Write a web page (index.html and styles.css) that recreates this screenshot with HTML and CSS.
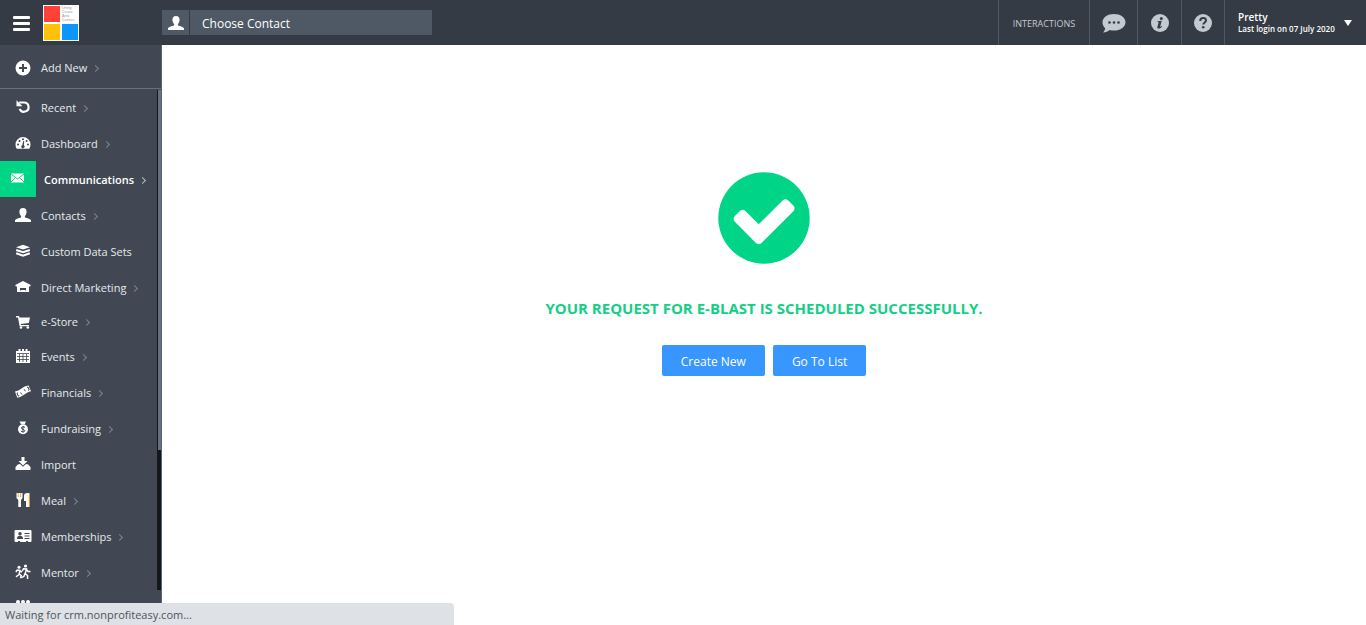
FILE: index.html
```
<!doctype html>
<html lang="en">
<head>
    <meta charset="utf-8">
    <title>E-Blast</title>
    <link rel="stylesheet" href="styles.css">
</head>
<body>
    <header class="topbar">
        <button class="menu-btn" type="button" aria-label="Menu"><i></i><i></i><i></i></button>
        <a class="logo" href="#">
            <span class="red"></span>
            <span class="logo-text">Unity Cross Arts Center</span>
            <span class="yellow"></span>
            <span class="blue"></span>
        </a>
        <div class="search">
            <label for="contact" aria-label="Contact">
                <svg width="16" height="14" viewBox="0 0 16 14"><path d="M8 0c2.500 0 3.600 1.500 3.600 3.800 0 2-.8 3.300-1.700 4.200v1.200c0 .6 5.600 1.200 6.100 3.200V14H0v-1.600c.5-2 6.100-2.600 6.100-3.200V8c-.9-.9-1.700-2.200-1.700-4.200C4.400 1.500 5.500 0 8 0z"/></svg>
            </label>
            <input type="text" id="contact" placeholder="Choose Contact">
        </div>
        <nav class="tools">
            <a class="interactions" href="#">INTERACTIONS</a>
            <a class="chat" href="#" aria-label="Messages">
                <svg width="24" height="20" viewBox="0 0 24 20"><path d="M12 1c6.300 0 11.500 3.500 11.500 8.300S18.300 17.600 12 17.600c-1.500 0-3-.2-4.300-.6C5.900 18.400 3.800 19.200 1 19.400c1.200-1.200 2-2.500 2.200-4.200C1.500 13.700.5 11.600.5 9.300.5 4.500 5.700 1 12 1z"/><g fill="#353b45"><circle cx="7.500" cy="9.500" r="1.300"/><circle cx="12" cy="9.500" r="1.300"/><circle cx="16.500" cy="9.500" r="1.300"/></g></svg>
            </a>
            <a class="info" href="#" aria-label="Information">
                <svg width="18" height="18" viewBox="0 0 18 18"><circle cx="9" cy="9" r="9"/><g fill="#353b45"><circle cx="10.300" cy="4.400" r="1.500"/><path d="M6.500 7.200l4.200-.5-1.500 5.700c-.2.800.6.500 1.600-.4l.4.500c-1.200 1.500-2.300 2.100-3.400 2.100-1.300 0-1.700-.8-1.300-2.200l1-3.500c.2-.8-.1-.9-1.100-1z"/></g></svg>
            </a>
            <a class="help" href="#" aria-label="Help">
                <svg width="18" height="18" viewBox="0 0 18 18"><circle cx="9" cy="9" r="9"/><path d="M6.200 7c0-1.900 1.100-2.900 2.900-2.900s2.900 1 2.900 2.400c0 2-2.700 1.900-2.700 4.100" fill="none" stroke="#353b45" stroke-width="2"/><circle cx="9.200" cy="13.200" r="1.300" fill="#353b45"/></svg>
            </a>
            <a class="user" href="#">
                <span><b>Pretty</b><small>Last login on 07 July 2020</small></span>
                <svg width="8" height="6" viewBox="0 0 8 6"><path d="M0 0h8L4 6z"/></svg>
            </a>
        </nav>
    </header>

    <div class="container">
        <aside class="sidebar">
            <a class="item add-new" href="#">
                <svg viewBox="0 0 16 16"><circle cx="8" cy="8" r="7.500"/><path d="M8 4v8M4 8h8" stroke="#414853" stroke-width="2"/></svg>
                <span>Add New</span><em></em>
            </a>
            <nav class="side-nav">
                <a class="item" href="#">
                    <svg viewBox="0 0 16 16"><path d="M4.200 3.500H9a4.600 4.600 0 1 1-4.300 6.300" fill="none" stroke="#fff" stroke-width="2.200"/><path d="M1.500 1.200v6h6z"/></svg>
                    <span>Recent</span><em></em>
                </a>
                <a class="item" href="#">
                    <svg viewBox="0 0 16 16"><path d="M8 2a7.500 7.500 0 0 1 7.500 7.500c0 1.600-.4 3-1.200 4.200H1.700A7.600 7.600 0 0 1 .5 9.500 7.500 7.500 0 0 1 8 2z"/><g fill="#414853"><circle cx="3" cy="9.500" r="1"/><circle cx="4.500" cy="6" r="1"/><circle cx="8" cy="4.300" r="1"/><circle cx="11.600" cy="6" r="1"/><circle cx="13" cy="9.500" r="1"/><path d="M8.200 6l1 .2-.3 4a1.700 1.700 0 1 1-1.500-.2z"/></g></svg>
                    <span>Dashboard</span><em></em>
                </a>
                <a class="item active" href="#">
                    <i class="tile"><svg viewBox="0 0 16 12"><path d="M1 .5h13v9H1z"/><path d="M1 1l6.500 5L14 1M1 9l4.200-4M14 9L9.800 5" fill="none" stroke="#00d487"/></svg></i>
                    <span>Communications</span><em></em>
                </a>
                <a class="item" href="#">
                    <svg viewBox="0 0 16 16"><path d="M8 1c2.500 0 3.600 1.500 3.600 3.800 0 2-.8 3.300-1.700 4.200v1.200c0 .6 5.600 1.200 6.100 3.200V15H0v-1.600c.5-2 6.100-2.600 6.100-3.200V9c-.9-.9-1.700-2.200-1.700-4.200C4.400 2.500 5.500 1 8 1z"/></svg>
                    <span>Contacts</span><em></em>
                </a>
                <a class="item" href="#">
                    <svg viewBox="0 0 16 16"><path d="M8 1.800l7 2.400L8 6.600 1 4.200z"/><path d="M1.200 7L8 9.200 14.800 7M1.200 10.300L8 12.600l6.800-2.300" fill="none" stroke="#fff" stroke-width="2"/></svg>
                    <span>Custom Data Sets</span>
                </a>
                <a class="item" href="#">
                    <svg viewBox="0 0 16 16"><path d="M8 2l7.800 4-.8 1.700-1-.4V13H2V7.300l-1 .4L.2 6z"/><path d="M5 9h6v3H5z" fill="#414853"/><path d="M5.500 11h5v1h-5z"/></svg>
                    <span>Direct Marketing</span><em></em>
                </a>
                <a class="item short" href="#">
                    <svg viewBox="0 0 16 16"><path d="M1 2h3l.5 1.500H15L13.800 9 5.700 10l.3 1h8v1.300H4.600L3 3.400H1z"/><circle cx="6" cy="13.500" r="1.300"/><circle cx="12.800" cy="13.500" r="1.300"/></svg>
                    <span>e-Store</span><em></em>
                </a>
                <a class="item" href="#">
                    <svg viewBox="0 0 16 16"><path d="M1 3h14v12H1z"/><path d="M3.500 1h2v3h-2zM10.500 1h2v3h-2zM7 1h2v3H7z"/><path d="M2 5.500h12M2 8.500h12M2 11.500h12M4.500 6v8M8 6v8M11.500 6v8" stroke="#414853" stroke-width=".8"/></svg>
                    <span>Events</span><em></em>
                </a>
                <a class="item" href="#">
                    <svg viewBox="0 0 16 16"><path d="M0 7.500C5 7 8 2 13.500 1.500L16 7.300C11 8 8 13 2.300 13.800z"/><g fill="none" stroke="#414853"><path d="M3 8.800l-1 .4 1.200 2.900 1-.4M12 3.500l1-.4L14.200 6l-1 .4M5.500 8.500l1.500 2M9 5.200l1.500 2" stroke-width="1"/></g></svg>
                    <span>Financials</span><em></em>
                </a>
                <a class="item" href="#">
                    <svg viewBox="0 0 16 16"><path d="M4.500 1.500h6.500L9.700 4.300H6z"/><circle cx="8" cy="9.300" r="5"/><path d="M10 7.500C9 6.500 6.300 6.500 6.300 8s3.500 1.200 3.500 2.700-2.800 1.500-3.800.4M8 6v6.600" fill="none" stroke="#414853" stroke-width="1"/></svg>
                    <span>Fundraising</span><em></em>
                </a>
                <a class="item" href="#">
                    <svg viewBox="0 0 16 16"><path d="M6.500 1h3v4h3L8 9.500 3.500 5h3z"/><path d="M2.800 8.500L5 8l3 2.700L11 8l2.200.5 2.300 2.500v3H.5v-3z"/></svg>
                    <span>Import</span>
                </a>
                <a class="item" href="#">
                    <svg viewBox="0 0 16 16"><path d="M1.500 1h6v5L6 8v7H3.300V8L1.500 6zM9 3.500C9 2 10.500 1 12 1h2v14h-3V9H9z"/><path d="M3.200 1v4M5.600 1v4M14.300 1v14" stroke="#f2b13c" stroke-width="1"/></svg>
                    <span>Meal</span><em></em>
                </a>
                <a class="item" href="#">
                    <svg class="wide" viewBox="0 0 18 14"><rect x=".5" y="1" width="17" height="12" rx="1"/><g fill="#414853"><circle cx="6" cy="4.800" r="1.700"/><path d="M3 10c0-2 1-3.200 3-3.200S9 8 9 10zM10.500 4h5v1h-5zM10.500 6.500h5v1h-5zM10.500 9h5v1h-5zM4 12h2v1H4zM12 12h2v1h-2z"/></g></svg>
                    <span>Memberships</span><em></em>
                </a>
                <a class="item" href="#">
                    <svg viewBox="0 0 16 16"><circle cx="4" cy="3.300" r="1.500"/><circle cx="10.500" cy="2" r="1.600"/><path d="M.8 8l1.500-2 2.500.3L4.200 10l2 1.500-.7 2.800M4 10.500L1 12.800M5 7l2 1M7.300 7L8.500 4.700l3 .3-1.300 4.500 2.300 2 .1 3.500M10 9.500L9 12.300l-2.500 1.400M11.500 5.500L13 7.500h2.500" fill="none" stroke="#fff" stroke-width="1.500"/></svg>
                    <span>Mentor</span><em></em>
                </a>
                <a class="item" href="#" aria-label="More">
                    <svg viewBox="0 0 16 16"><circle cx="3" cy="2" r="2"/><circle cx="8" cy="2" r="2"/><circle cx="13" cy="2" r="2"/><circle cx="3" cy="7" r="2"/><circle cx="8" cy="7" r="2"/><circle cx="13" cy="7" r="2"/></svg>
                </a>
            </nav>
            <div class="scroll"><div class="thumb"></div></div>
        </aside>

        <main class="content">
            <svg class="done" width="92" height="92" viewBox="0 0 92 92"><circle cx="46" cy="46" r="45.700"/><path class="tick" d="M16.600 44.300l5.600-5.600q2.600-2 5 0L40.700 52.200 64.800 28.200q2.700-2 5.200 0l5.600 5.600q2 2.500 0 5.200L43.300 71.200q-2.600 2-5.100 0L16.600 49.500q-2-2.600 0-5.200z"/></svg>
            <h1>YOUR REQUEST FOR E-BLAST IS SCHEDULED SUCCESSFULLY.</h1>
            <div class="btns">
                <button type="button">Create New</button>
                <button type="button">Go To List</button>
            </div>
        </main>
    </div>

    <div class="status">Waiting for crm.nonprofiteasy.com...</div>
</body>
</html>
```
FILE: styles.css
```
* { box-sizing:border-box; }
body { margin:0; height:100vh; display:flex; flex-direction:column; overflow:hidden; background:#fff; font-family:"Open Sans","Liberation Sans",sans-serif; font-size:11px; }
a { color:inherit; text-decoration:none; }
button, input { font-family:inherit; border:0; }
svg { display:block; flex:none; }

/* top bar */
.topbar { height:45px; flex:none; display:flex; align-items:center; background:#353b45; color:#fff; }
.menu-btn { width:18px; margin:1px 12px 0 13px; padding:0; background:none; display:flex; flex-direction:column; gap:3px; }
.menu-btn i { height:3px; width:17px; background:#fff; border-radius:1px; }
.logo { width:36px; height:36px; padding:1px; display:grid; grid-template-columns:16px 16px; grid-template-rows:16px 16px; gap:2px; background:#fff; overflow:hidden; }
.logo-text { color:#888; font-size:4px; line-height:4px; width:12px; }
.red { background:#ff4136; }
.yellow { background:#ffc20a; }
.blue { background:#0c96ff; }
.search { margin-left:83px; display:flex; gap:1px; height:25px; flex:0 1 270px; }
.search label { width:27px; background:#4e5965; display:flex; align-items:center; justify-content:center; }
.search svg { fill:#fff; }
.search input { flex:1; min-width:0; padding:2px 12px 0; background:#4e5965; color:#fff; font-size:12px; }
.search input::placeholder { color:#fff; opacity:1; }
.tools { margin-left:auto; height:100%; display:flex; color:#c3c9d1; }
.tools a { display:flex; align-items:center; justify-content:center; border-left:1px solid #4e5763; }
.tools svg { fill:#c3c9d1; }
.tools .interactions { width:91px; font-size:9px; padding-top:2px; }
.tools .chat { width:48px; }
.tools .info { width:44px; }
.tools .help { width:43px; }
.tools .user { width:142px; padding:0 14px 0 13px; justify-content:space-between; color:#fff; }
.user b, .user small { display:block; font-weight:600; line-height:12px; white-space:nowrap; }
.user b { font-size:10px; }
.user small { font-size:8px; }
.tools .user svg { fill:#fff; }

/* sidebar */
.container { flex:1; min-height:0; display:flex; }
.sidebar { position:relative; width:162px; flex:none; display:flex; flex-direction:column; background:#414853; border-right:1px solid #596475; }
.side-nav { flex:1; min-height:0; overflow:hidden; }
.item { height:36px; padding-left:15px; display:flex; align-items:center; color:#e6eaee; white-space:nowrap; }
.item svg { width:16px; height:16px; fill:#fff; margin-right:10px; }
.item svg.wide { width:18px; height:14px; margin:0 9px 0 -1px; }
.item em { width:5px; height:5px; margin:2px 0 0 6px; border:solid #7b858f; border-width:1px 1px 0 0; transform:rotate(45deg); }
.add-new { height:44px; padding-top:2px; border-bottom:1px solid #66717f; }
.short { height:33px; }
.active { padding-left:0; color:#fff; font-weight:600; }
.tile { width:36px; height:36px; margin-right:8px; display:flex; align-items:center; justify-content:center; background:#00d487; }
.item .tile svg { width:16px; height:12px; margin:0; }
.active em { border-color:#b3bac2; }
.scroll { position:absolute; top:45px; right:0; width:4px; height:500px; background:#14171b; padding-left:1px; }
.thumb { height:72%; background:#66717f; }

/* content */
.content { flex:1; padding-top:127px; display:flex; flex-direction:column; align-items:center; }
.done { fill:#00d487; }
.done .tick { fill:#fff; }
.content h1 { margin:34px 0 0; font-size:15px; line-height:20px; color:#14cf86; }
.btns { margin-top:27px; display:flex; gap:8px; }
.btns button { height:31px; padding:2px 19px 0; border-radius:2px; background:#3896ff; color:#fff; font-size:12px; }

/* browser status */
.status { position:fixed; left:0; bottom:0; width:454px; height:22px; padding-left:5px; line-height:24px; font-size:11px; background:#dee1e6; color:#50545a; border-top-right-radius:4px; }
```
